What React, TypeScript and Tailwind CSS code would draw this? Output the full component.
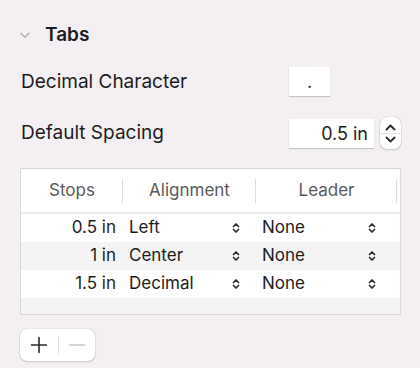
import type { ReactNode } from "react";

const rows = [
  { stop: "0.5 in", align: "Left", leader: "None" },
  { stop: "1 in", align: "Center", leader: "None" },
  { stop: "1.5 in", align: "Decimal", leader: "None" },
];

function UpDown() {
  return (
    <svg width="8" height="12" viewBox="0 0 8 12" fill="none" stroke="#2b2b2b" strokeWidth="1.7" strokeLinecap="round" strokeLinejoin="round">
      <path d="M1.5 4.5 4 2l2.5 2.5" />
      <path d="M1.5 7.5 4 10l2.5-2.5" />
    </svg>
  );
}

function HeaderCell({ children, divider }: { children: ReactNode; divider?: boolean }) {
  return (
    <div className="relative flex items-center justify-center">
      {children}
      {divider ? <span className="absolute right-0 top-[10px] h-[24px] w-px bg-[#dedede]" /> : null}
    </div>
  );
}

export default function App() {
  return (
    <div className="h-[368px] w-[420px] overflow-hidden bg-[#f3eff3] pt-[24px] font-['Inter',sans-serif] text-[#1d1d1d]">
      <div className="flex h-[22px] items-center">
        <svg className="ml-[20px]" width="10" height="7" viewBox="0 0 10 7" fill="none" stroke="#b5b2b6" strokeWidth="1.5" strokeLinecap="round" strokeLinejoin="round">
          <path d="M1 1.2 5 5.2l4-4" />
        </svg>
        <span className="ml-[15px] text-[19px] font-semibold leading-[22px]">Tabs</span>
      </div>

      <div className="mt-[21px] flex h-[29px] items-center pl-[21px]">
        <span className="text-[19px] leading-[22px]">Decimal Character</span>
        <div className="ml-auto mr-[90px] flex h-[29px] w-[41px] items-center justify-center bg-white text-[18px] shadow-[0_1px_1px_rgba(0,0,0,0.18)]">
          .
        </div>
      </div>

      <div className="mt-[21px] flex h-[32px] items-center pl-[21px]">
        <span className="text-[19px] leading-[22px]">Default Spacing</span>
        <div className="ml-auto flex h-[29px] w-[85px] items-center justify-end bg-white pr-[6px] text-[18px] shadow-[0_1px_1px_rgba(0,0,0,0.18)]">
          0.5 in
        </div>
        <div className="ml-[6px] mr-[19px] flex h-[32px] w-[21px] flex-col items-center justify-center rounded-[7px] bg-white shadow-[0_0_1px_rgba(0,0,0,0.35),0_1px_2px_rgba(0,0,0,0.15)]">
          <svg width="11" height="7" viewBox="0 0 11 7" fill="none" stroke="#2a2a2a" strokeWidth="1.8" strokeLinecap="round" strokeLinejoin="round">
            <path d="M1.5 5.5 5.5 1.5l4 4" />
          </svg>
          <span className="my-[2px] h-px w-full bg-[#e4e4e4]" />
          <svg width="11" height="7" viewBox="0 0 11 7" fill="none" stroke="#2a2a2a" strokeWidth="1.8" strokeLinecap="round" strokeLinejoin="round">
            <path d="M1.5 1.5 5.5 5.5l4-4" />
          </svg>
        </div>
      </div>

      <div className="ml-[20px] mt-[19px] h-[147px] w-[381px] border border-[#d9d7d9] bg-white">
        <div className="grid h-[45px] grid-cols-[102px_133px_1fr] border-b-2 border-[#ebebeb] pr-[3px] text-[17px] text-[#5a5a5a]">
          <HeaderCell divider>Stops</HeaderCell>
          <HeaderCell divider>Alignment</HeaderCell>
          <HeaderCell divider>Leader</HeaderCell>
        </div>
        {rows.map((r, i) => (
          <div
            key={r.stop}
            className={`grid h-[28px] grid-cols-[102px_133px_1fr] items-center text-[17px] ${i % 2 === 1 ? "bg-[#f4f4f4]" : "bg-white"}`}
          >
            <span className="pr-[7px] text-right">{r.stop}</span>
            <div className="flex items-center pl-[6px] pr-[16px]">
              <span>{r.align}</span>
              <span className="ml-auto">
                <UpDown />
              </span>
            </div>
            <div className="flex items-center pl-[6px] pr-[24px]">
              <span>{r.leader}</span>
              <span className="ml-auto">
                <UpDown />
              </span>
            </div>
          </div>
        ))}
        <div className="h-[16px] bg-[#f4f4f4]" />
      </div>

      <div className="ml-[20px] mt-[14px] flex h-[32px] w-[75px] items-center rounded-[7px] bg-white shadow-[0_0_1px_rgba(0,0,0,0.3),0_1px_2px_rgba(0,0,0,0.15)]">
        <div className="flex w-[38px] items-center justify-center">
          <svg width="18" height="18" viewBox="0 0 18 18" stroke="#2a2a2a" strokeWidth="1.6" strokeLinecap="round">
            <path d="M9 1.5v15M1.5 9h15" />
          </svg>
        </div>
        <span className="h-[18px] w-px bg-[#e2e2e2]" />
        <div className="flex flex-1 items-center justify-center">
          <svg width="18" height="18" viewBox="0 0 18 18" stroke="#c9c9c9" strokeWidth="1.6" strokeLinecap="round">
            <path d="M1.5 9h15" />
          </svg>
        </div>
      </div>
    </div>
  );
}
